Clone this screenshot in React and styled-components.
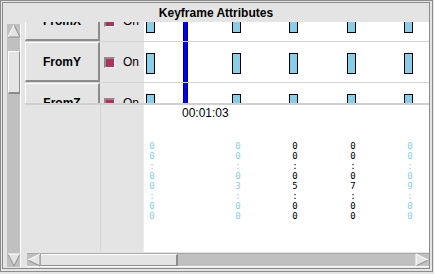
import React from "react";
import styled, { createGlobalStyle } from "styled-components";

const GlobalStyle = createGlobalStyle`
  html, body {
    margin: 0;
    padding: 0;
    background: #e4e4e4;
  }
  body {
    font-family: "Liberation Sans", Arial, sans-serif;
  }
`;

const tracks = [
  { name: "FromX", on: true },
  { name: "FromY", on: true },
  { name: "FromZ", on: true },
];

// minutes along the track; muted ones are drawn in sky blue
const keyframes = [
  { t: 0, label: "00:00:00", muted: true },
  { t: 3, label: "00:03:00", muted: true },
  { t: 5, label: "00:05:00" },
  { t: 7, label: "00:07:00" },
  { t: 9, label: "00:09:00", muted: true },
];

const PX_PER_MIN = 28.67;
const ORIGIN = 2;
const CURSOR_X = 39;

const keyX = (t) => Math.round(ORIGIN + t * PX_PER_MIN);

function Arrow({ dir }) {
  const shapes = {
    up: { fill: "7,1 13,13 1,13", light: "1,13 7,1", dark: "7,1 13,13 1,13" },
    down: { fill: "1,1 13,1 7,13", light: "1,1 13,1", dark: "13,1 7,13 1,1" },
    left: { fill: "1,7 13,1 13,13", light: "13,1 1,7", dark: "1,7 13,13 13,1" },
    right: { fill: "1,1 13,7 1,13", light: "1,13 1,1 13,7", dark: "13,7 1,13" },
  };
  const s = shapes[dir];
  return (
    <ArrowBox>
      <svg width="14" height="14" viewBox="0 0 14 14">
        <polygon points={s.fill} fill="#e4e4e4" />
        <polyline points={s.dark} fill="none" stroke="#8c8c8c" strokeWidth="1" />
        <polyline points={s.light} fill="none" stroke="#ffffff" strokeWidth="1" />
      </svg>
    </ArrowBox>
  );
}

export default function App() {
  return (
    <>
      <GlobalStyle />
      <Frame>
        <Inner>
          <Title>Keyframe Attributes</Title>
          <Body>
            <VScroll>
              <Arrow dir="up" />
              <VTrack>
                <VThumb />
              </VTrack>
              <Arrow dir="down" />
            </VScroll>

            <Content>
              <RowsViewport>
                <RowsList>
                  {tracks.map((tr) => (
                    <Row key={tr.name}>
                      <NameButton>{tr.name}</NameButton>
                      <ToggleCell>
                        <Check $on={tr.on} />
                        <span>On</span>
                      </ToggleCell>
                      <TrackCell>
                        {keyframes.map((k) => (
                          <Key key={k.t} style={{ left: keyX(k.t) }} />
                        ))}
                        <Cursor style={{ left: CURSOR_X }} />
                      </TrackCell>
                    </Row>
                  ))}
                </RowsList>
              </RowsViewport>

              <Lower>
                <NameFiller />
                <ToggleFiller />
                <TimelinePane>
                  <TimeLabel style={{ left: CURSOR_X - 1 }}>00:01:03</TimeLabel>
                  {keyframes.map((k) => (
                    <StampColumn key={k.t} $muted={k.muted} style={{ left: keyX(k.t) + 1 }}>
                      {k.label.split("").map((c, i) => (
                        <span key={i}>{c}</span>
                      ))}
                    </StampColumn>
                  ))}
                </TimelinePane>
              </Lower>
            </Content>

            <HScroll>
              <Arrow dir="left" />
              <HThumb />
              <HTrack />
              <Arrow dir="right" />
            </HScroll>
          </Body>
        </Inner>
      </Frame>
    </>
  );
}

const Frame = styled.div`
  width: 433px;
  height: 272px;
  box-sizing: border-box;
  border: 1px solid #8c8c8c;
  padding: 1px 2px 2px 1px;
  background: #e4e4e4;
`;

const Inner = styled.div`
  height: 100%;
  box-sizing: border-box;
  border: 1px solid #8c8c8c;
  display: flex;
  flex-direction: column;
`;

const Title = styled.div`
  flex: none;
  height: 19px;
  display: flex;
  align-items: center;
  justify-content: center;
  font-size: 12px;
  font-weight: bold;
  color: #000;
`;

const Body = styled.div`
  flex: 1;
  min-height: 0;
  display: grid;
  grid-template-columns: 14px 1fr;
  grid-template-rows: 1fr 14px;
  column-gap: 4px;
  row-gap: 1px;
  padding: 0 0 1px 4px;
`;

const VScroll = styled.div`
  grid-row: 1 / 3;
  grid-column: 1;
  margin-top: 2px;
  display: flex;
  flex-direction: column;
  background: #c0c0c0;
  box-shadow: inset -1px 0 0 #ffffff;
`;

const ArrowBox = styled.div`
  flex: none;
  width: 14px;
  height: 14px;
  display: flex;

  svg {
    display: block;
  }
`;

const VTrack = styled.div`
  flex: 1;
  display: flex;
  flex-direction: column;
  padding: 0 1px;
`;

const VThumb = styled.div`
  margin-top: 13px;
  height: 43px;
  box-sizing: border-box;
  background: #e4e4e4;
  border-top: 1px solid #ffffff;
  border-left: 1px solid #ffffff;
  border-right: 1px solid #8c8c8c;
  border-bottom: 2px solid #8c8c8c;
`;

const Content = styled.div`
  grid-row: 1;
  grid-column: 2;
  min-height: 0;
  display: flex;
  flex-direction: column;
`;

const RowsViewport = styled.div`
  flex: none;
  height: 81px;
  overflow: hidden;
  border-bottom: 2px solid #d0d0d0;
`;

const RowsList = styled.div`
  margin-top: -21px;
  display: flex;
  flex-direction: column;
  gap: 1px;
  background: #d4d4d4;
`;

const Row = styled.div`
  height: 40px;
  display: flex;
  background: #e4e4e4;
`;

const NameButton = styled.div`
  flex: none;
  width: 75px;
  box-sizing: border-box;
  display: flex;
  align-items: center;
  justify-content: center;
  border-top: 1px solid #ffffff;
  border-left: 1px solid #ffffff;
  border-right: 2px solid #8c8c8c;
  border-bottom: 2px solid #8c8c8c;
  font-size: 12px;
  font-weight: bold;
  color: #000;
`;

const ToggleCell = styled.div`
  flex: none;
  width: 44px;
  box-sizing: border-box;
  display: flex;
  align-items: center;
  gap: 8px;
  padding-left: 4px;
  font-size: 12px;
  color: #000;
`;

const Check = styled.div`
  flex: none;
  width: 11px;
  height: 11px;
  box-sizing: border-box;
  border-style: solid;
  border-width: 2px 1px 1px 2px;
  border-color: #8c8c8c #ffffff #ffffff #8c8c8c;
  background: ${(p) => (p.$on ? "#b03060" : "#e4e4e4")};
`;

const TrackCell = styled.div`
  flex: 1;
  position: relative;
  background: #ffffff;
  overflow: hidden;
`;

const Key = styled.div`
  position: absolute;
  top: 11px;
  width: 9px;
  height: 21px;
  box-sizing: border-box;
  border: 1px solid #000;
  background: #87ceeb;
`;

const Cursor = styled.div`
  position: absolute;
  top: 0;
  bottom: 0;
  width: 5px;
  box-sizing: border-box;
  background: #0000ff;
  border-left: 1px solid #00007a;
  border-right: 1px solid #00007a;
`;

const Lower = styled.div`
  flex: 1;
  display: flex;
`;

const NameFiller = styled.div`
  flex: none;
  width: 75px;
`;

const ToggleFiller = styled.div`
  flex: none;
  width: 44px;
  box-sizing: border-box;
  border-left: 1px solid #d6d6d6;
  border-right: 1px solid #ececec;
`;

const TimelinePane = styled.div`
  flex: 1;
  position: relative;
  background: #ffffff;
`;

const TimeLabel = styled.div`
  position: absolute;
  top: 1px;
  font-size: 12px;
  line-height: 14px;
  color: #000;
`;

const StampColumn = styled.div`
  position: absolute;
  top: 36px;
  width: 10px;
  display: flex;
  flex-direction: column;
  align-items: center;
  font-family: "DejaVu Sans Mono", "Liberation Mono", monospace;
  font-size: 9px;
  line-height: 10px;
  color: ${(p) => (p.$muted ? "#87ceeb" : "#000000")};
`;

const HScroll = styled.div`
  grid-row: 2;
  grid-column: 2;
  margin-left: 2px;
  display: flex;
  background: #c0c0c0;
  box-shadow: inset 0 1px 0 #a8a8a8, inset 0 -1px 0 #ffffff;
`;

const HThumb = styled.div`
  flex: none;
  width: 137px;
  box-sizing: border-box;
  margin: 1px 0;
  background: #e4e4e4;
  border-top: 1px solid #ffffff;
  border-right: 2px solid #8c8c8c;
  border-bottom: 1px solid #8c8c8c;
`;

const HTrack = styled.div`
  flex: 1;
`;
